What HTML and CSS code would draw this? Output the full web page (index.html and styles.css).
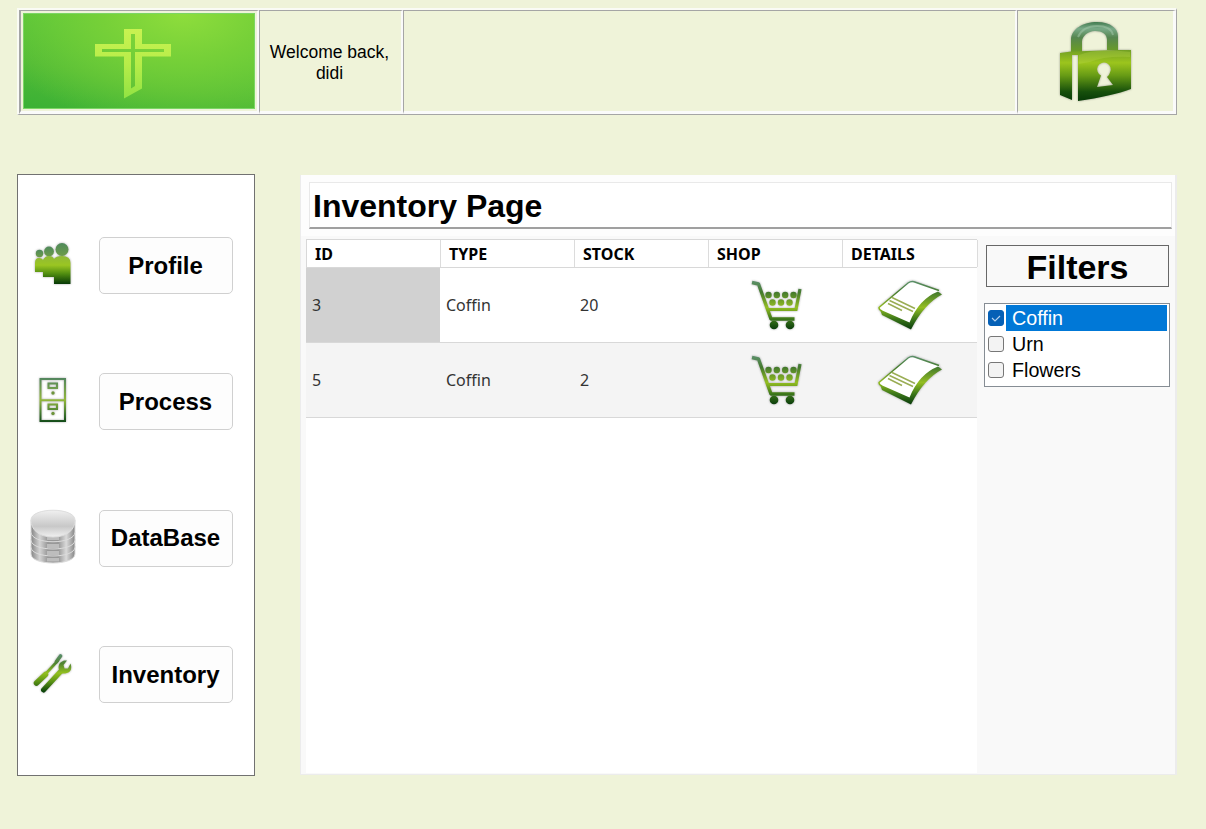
FILE: index.html
```html
<!DOCTYPE html>
<html lang="en">
<head>
<meta charset="utf-8">
<title>Inventory Page</title>
<link rel="stylesheet" href="styles.css">
</head>
<body>
<svg class="defs" width="0" height="0" aria-hidden="true">
  <defs>
    <linearGradient id="gloss" x1="0" y1="0" x2="0" y2="1">
      <stop offset="0" stop-color="#4f8a5c"/><stop offset="1" stop-color="#6d9c48"/>
    </linearGradient>
    <linearGradient id="cartFill" gradientUnits="userSpaceOnUse" x1="0" y1="0" x2="0" y2="50">
      <stop offset="0" stop-color="#5e9270"/><stop offset=".25" stop-color="#447a2c"/>
      <stop offset=".55" stop-color="#94be22"/><stop offset=".78" stop-color="#3b7619"/><stop offset="1" stop-color="#07390b"/>
    </linearGradient>
    <symbol id="cart" viewBox="0 0 52 50">
      <g fill="none" stroke="url(#cartFill)">
        <path d="M1 2.500 7.500 4 20 39H43.500" stroke-width="3.400" stroke-linejoin="round"/>
        <path d="M16.500 29.500H45L49 9" stroke-width="3.200"/>
      </g>
      <g fill="url(#cartFill)">
        <circle cx="17.500" cy="15" r="3.200"/><circle cx="25.800" cy="15" r="3.200"/><circle cx="34.200" cy="15" r="3.200"/><circle cx="42.500" cy="15" r="3.200"/>
        <circle cx="21.500" cy="22.500" r="3.200"/><circle cx="30" cy="22.500" r="3.200"/><circle cx="38.500" cy="22.500" r="3.200"/>
        <circle cx="23" cy="45" r="4.300"/><circle cx="39" cy="45" r="4.300"/>
      </g>
    </symbol>
    <symbol id="sheet" viewBox="0 0 66 50">
      <path d="M2 27.500 29 3.500Q33 .5 37 1.700L63 11Q44 22 34.500 44L4 31Q1 29.500 2 27.500Z" fill="#fff"/>
      <path d="M3 29.500 32.500 42.500Q42 19 61 11.500L65 14.500Q47 24 34 49.500L5 35Z" fill="url(#cartFill)"/>
      <path d="M62 10.500 37 1.700Q34 .8 31 3L2 27.500Q2 30 5 31" fill="none" stroke="url(#cartFill)" stroke-width="1.500"/>
      <path d="M15 17.500 38 28.500M12.500 20.500 36 31.500M11 23.500 25 30.500" fill="none" stroke="#9aad54" stroke-width="1.500"/>
    </symbol>
  </defs>
</svg>

<header class="topbar">
  <div class="cell cell-logo">
    <div class="logo">
      <svg width="76" height="70" viewBox="0 0 76 70">
        <defs><linearGradient id="crossFill" x1="0" y1="0" x2="0" y2="1"><stop offset="0" stop-color="#c8f251"/><stop offset=".5" stop-color="#b7ed49"/><stop offset="1" stop-color="#91e343"/></linearGradient></defs>
        <path fill="url(#crossFill)" fill-rule="evenodd" d="M29 0H47V15H76V27.500H47V59.500L29 69.500V27.500H0V15H29ZM36 5V20H7V23H36V59.500L40 57V23H69V20H40V5Z"/>
      </svg>
    </div>
  </div>
  <div class="cell cell-welcome">Welcome back,<br>didi</div>
  <div class="cell cell-space"></div>
  <div class="cell cell-lock">
    <svg class="shadow" width="72" height="79" viewBox="0 0 72 79">
      <defs>
        <linearGradient id="shackle" x1="0" y1="0" x2="0" y2="1"><stop offset="0" stop-color="#437b50"/><stop offset=".22" stop-color="#79aa88"/><stop offset=".5" stop-color="#568650"/><stop offset="1" stop-color="#6d9f20"/></linearGradient>
        <linearGradient id="lockBody" x1="0" y1="0" x2="0" y2="1"><stop offset="0" stop-color="#719f25"/><stop offset=".25" stop-color="#9cc51d"/><stop offset=".5" stop-color="#679b15"/><stop offset=".82" stop-color="#164f0b"/><stop offset="1" stop-color="#073a07"/></linearGradient>
      </defs>
      <path d="M12 31V18C12 7 24 0 38 0S59 7 59 14V28H48V18C48 12 43 9 36 9S23 14 23 20V31Z" fill="url(#shackle)"/>
      <path d="M19 15Q24 4 38 4T54 13" fill="none" stroke="#a5c9ac" stroke-width="2" opacity=".5"/>
      <path fill="url(#lockBody)" fill-rule="evenodd" d="M1 31 12 29.500 59 28H72V67Q53 74 19 79V33H13V78L1 73ZM42 53.500A6.800 6.800 0 1 1 51 50.500Q50.500 53 48 55L54 63 38 65Z"/>
      <path d="M20 33Q38 26 71 30V35Q45 34 31 40L20 42Z" fill="#b9d64d" opacity=".3"/>
    </svg>
  </div>
</header>

<div class="layout">
  <nav class="sidebar">
    <div class="nav-row">
      <svg class="shadow" width="58" height="46" viewBox="0 0 58 46">
        <defs><linearGradient id="people" gradientUnits="userSpaceOnUse" x1="0" y1="14" x2="0" y2="43"><stop offset="0" stop-color="#8fb83a"/><stop offset=".35" stop-color="#9bc622"/><stop offset=".65" stop-color="#4f8c10"/><stop offset="1" stop-color="#063806"/></linearGradient></defs>
        <g fill="url(#gloss)">
          <circle cx="14.500" cy="12.500" r="3.700"/><circle cx="24" cy="10.500" r="4.900"/><circle cx="37" cy="8.500" r="6.500"/>
        </g>
        <path fill="url(#people)" d="M10 22Q10 17 14 17Q17 17 18 19Q20 15 24 15Q28 15 29 18Q31 15 37 15Q45.500 15 45.500 22V43H29V36H18V31H10Z"/>
      </svg>
      <button class="nav-btn">Profile</button>
    </div>
    <div class="nav-row">
      <svg class="shadow" width="58" height="46" viewBox="0 0 58 46">
        <defs><linearGradient id="cabinet" gradientUnits="userSpaceOnUse" x1="0" y1="0" x2="0" y2="46"><stop offset="0" stop-color="#4f8360"/><stop offset=".5" stop-color="#93b83b"/><stop offset=".75" stop-color="#4c8134"/><stop offset="1" stop-color="#0d4516"/></linearGradient></defs>
        <g fill="none" stroke="url(#cabinet)">
          <path d="M15.500 2H40V44H15.500ZM15.500 23.300H40.010" stroke-width="2"/>
          <path d="M23.500 6.500H32V11H23.500ZM23.500 27.500H32V32H23.500Z" stroke-width="2"/>
        </g>
        <g fill="#6e953c"><circle cx="28" cy="16" r="1.700"/><circle cx="28" cy="36.500" r="1.700"/></g>
      </svg>
      <button class="nav-btn">Process</button>
    </div>
    <div class="nav-row">
      <svg width="58" height="56" viewBox="0 0 58 56">
        <defs>
          <linearGradient id="drum" x1="0" x2="1" y1="0" y2="0"><stop offset="0" stop-color="#858585"/><stop offset=".2" stop-color="#d4d4d4"/><stop offset=".38" stop-color="#989898"/><stop offset=".62" stop-color="#989898"/><stop offset=".8" stop-color="#dadada"/><stop offset="1" stop-color="#858585"/></linearGradient>
          <linearGradient id="drumTop" x1="0" x2="0" y1="0" y2="1"><stop offset="0" stop-color="#f0f0f0"/><stop offset=".6" stop-color="#c8c8c8"/><stop offset="1" stop-color="#f0f0f0"/></linearGradient>
        </defs>
        <g fill="url(#drum)" stroke="#dcdcdc" stroke-width="1">
          <path d="M6 38V46C6 58 50 58 50 46V38Z"/>
          <path d="M6 31V39C6 51 50 51 50 39V31Z"/>
          <path d="M6 24V32C6 44 50 44 50 32V24Z"/>
          <path d="M6 12V24C6 37 50 37 50 24V12Z"/>
        </g>
        <path d="M22 28.500H34V32H22ZM22 36H34V40H22ZM22 43H34V47H22ZM22 50H34V53.500H22Z" fill="#bdbdbd"/>
        <path d="M6 12C6-1 50-1 50 12C50 21 43 29 28 29S6 21 6 12Z" fill="url(#drumTop)" stroke="#dedede"/>
      </svg>
      <button class="nav-btn">DataBase</button>
    </div>
    <div class="nav-row">
      <svg class="shadow" width="58" height="46" viewBox="0 0 58 46">
        <defs>
          <linearGradient id="tools" gradientUnits="userSpaceOnUse" x1="0" y1="4" x2="0" y2="42"><stop offset="0" stop-color="#5a8f70"/><stop offset=".25" stop-color="#4f8430"/><stop offset=".5" stop-color="#93c01f"/><stop offset=".72" stop-color="#5c9414"/><stop offset="1" stop-color="#084009"/></linearGradient>
        </defs>
        <g fill="none" stroke="url(#tools)" stroke-linecap="round">
          <path d="M11.500 33 20.500 24.500" stroke-width="5.500"/>
          <path d="M20.500 24 33 10.500" stroke-width="2.600"/>
          <path d="M31.500 11.500 35.500 6" stroke-width="3.600"/>
          <path d="M18.500 40 37 20" stroke-width="5"/>
        </g>
        <path d="M34 20Q32 13 39 10.500L42 10.500 38.500 15 39.500 18.500 43 18.500 45.500 13.500Q48 21 42 23Q38 24 36 23Z" fill="url(#tools)"/>
      </svg>
      <button class="nav-btn">Inventory</button>
    </div>
  </nav>

  <main class="panel">
    <h1 class="title">Inventory Page</h1>
    <div class="content">
      <div class="grid">
        <div class="row head"><div>ID</div><div>TYPE</div><div>STOCK</div><div>SHOP</div><div>DETAILS</div></div>
        <div class="row"><div class="selected">3</div><div>Coffin</div><div>20</div>
          <div class="pic"><svg class="shadow cart" width="52" height="50"><use href="#cart"/></svg></div>
          <div class="pic"><svg class="shadow" width="66" height="50"><use href="#sheet"/></svg></div></div>
        <div class="row alt"><div>5</div><div>Coffin</div><div>2</div>
          <div class="pic"><svg class="shadow cart" width="52" height="50"><use href="#cart"/></svg></div>
          <div class="pic"><svg class="shadow" width="66" height="50"><use href="#sheet"/></svg></div></div>
      </div>
      <aside class="filters">
        <h2 class="filters-title">Filters</h2>
        <div class="checklist">
          <div class="option active"><span class="box checked"><svg width="14" height="14" viewBox="0 0 14 14"><path d="M3 7 6 10 11 5" fill="none" stroke="#b5d3ef" stroke-width="1.100"/></svg></span><span class="label">Coffin</span></div>
          <div class="option"><span class="box"></span><span class="label">Urn</span></div>
          <div class="option"><span class="box"></span><span class="label">Flowers</span></div>
        </div>
      </aside>
    </div>
  </main>
</div>
</body>
</html>
```
FILE: styles.css
```css
* { box-sizing: border-box; }

body {
  margin: 0;
  padding: 8px 29px 0 17px;
  height: 829px;
  overflow: hidden;
  background: #eff3d9;
  color: #000;
  font-family: "Liberation Sans", Arial, sans-serif;
}

.defs { display: block; height: 0; }
svg { display: block; flex: none; }
.shadow { filter: drop-shadow(0 0 1px rgba(0, 0, 0, .35)); }

/* Top bar: raised outer edge with sunken cells */
.topbar {
  display: flex;
  height: 107px;
  border: solid;
  border-width: 2px 1px 1px 2px;
  border-color: #fafbf5 #a5a5a5 #a5a5a5 #fafbf5;
}
.cell {
  display: flex;
  align-items: center;
  justify-content: center;
  border: solid;
  border-width: 1px 2px 3px 1px;
  border-color: #a5a5a5 #fafafa #fafafa #a5a5a5;
}
.cell-logo { width: 240px; border-left-width: 2px; }
.cell-welcome { width: 144px; padding: 3px 2px 0 0; font-size: 17.500px; line-height: 21px; text-align: center; white-space: nowrap; }
.cell-space { width: 614px; }
.cell-lock { flex: 1; padding-right: 2px; border-right-width: 3px; }
.logo {
  display: flex;
  justify-content: center;
  width: 232px;
  height: 96px;
  padding: 15px 12px 0 0;
  border: 1px solid #7bd665;
  background: radial-gradient(ellipse 200px 115px at 69% 0, #8edd3c 0, #76d038 40%, rgba(108, 202, 56, 0) 100%), linear-gradient(10deg, #3bb135 0, #4fb936 35%, #5cca3b 100%);
}

.layout { display: flex; gap: 45px; margin-top: 59px; }

.sidebar {
  width: 238px;
  height: 602px;
  padding-top: 62px;
  border: 1px solid #717171;
  background: #fff;
}
.nav-row { display: flex; align-items: center; height: 57px; margin-bottom: 79.400px; padding-left: 7px; }
.nav-row svg { margin-top: -4px; }
.nav-btn {
  width: 134px;
  height: 57px;
  margin-left: 16px;
  padding: 0 1px 0 0;
  border: 1px solid #d0d0d0;
  border-radius: 5px;
  background: #fdfdfd;
  color: #000;
  font: bold 24px "Liberation Sans", Arial, sans-serif;
}

.panel {
  width: 877px;
  height: 600px;
  margin-top: 1px;
  padding: 7px 3px 0 5px;
  border: solid #ececec;
  border-width: 0 2px 1px 1px;
  background: linear-gradient(#fdfdfd 61px, #f9f9f9 61px);
}
.title {
  height: 47px;
  margin: 0 0 0 3px;
  padding: 0 0 0 3px;
  border: 1px solid #e9e9e9;
  border-bottom: 2px solid #a0a0a0;
  background: #fff;
  font-size: 32px;
  line-height: 46px;
}
.content { display: flex; padding-top: 10px; }
.grid { width: 671px; height: 534px; background: #fff; }
.row {
  display: grid;
  grid-template-columns: 134px 134px 134px 134px 135px;
  height: 75px;
  border-bottom: 1px solid #d8d8d8;
  font: 16px "Noto Sans", sans-serif;
  color: #333;
}
.row > div { display: flex; align-items: center; padding-left: 6px; }
.row .selected { background: #d1d1d1; }
.row.alt { background: #f4f4f4; }
.row.head { height: 29px; border: 1px solid #d8d8d8; border-right: 0; color: #000; font-weight: 700; }
.row.head > div { padding: 0 0 0 8px; border-right: 1px solid #dcdcdc; }
.row > .pic { justify-content: center; padding: 0; }
.cart { margin-left: 3px; }

.filters { padding: 6px 0 0 7px; }
.filters-title {
  width: 183px;
  height: 42px;
  margin: 0 0 16px 2px;
  border: 1px solid #686868;
  font-size: 34px;
  line-height: 43px;
  text-align: center;
}
.checklist { width: 186px; height: 84px; padding: 1px 2px; border: 1px solid #868d94; background: #fff; }
.option { display: flex; align-items: center; height: 26.200px; font-size: 19.700px; }
.box { width: 16px; height: 16px; margin: 0 2px 0 1px; border: 1px solid #777; border-radius: 3px; background: #f3f3f3; }
.box.checked { background: #0560b6; border-color: #0560b6; }
.label { flex: 1; padding-left: 6px; line-height: 26px; }
.active .label { background: #0078d7; color: #fff; }
```
